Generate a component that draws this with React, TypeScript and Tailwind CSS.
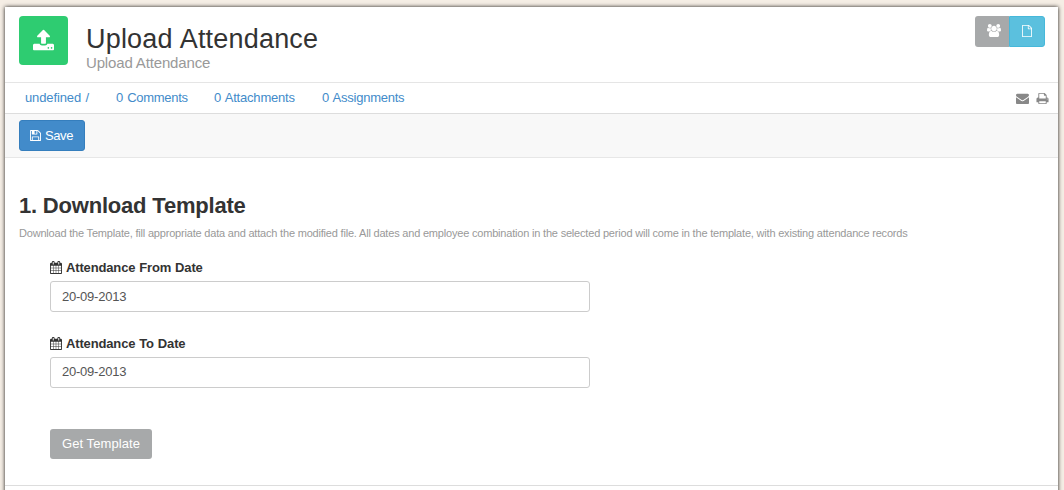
import React from "react";

const paths = {
  upload:
    "M1344 1472q0-26-19-45t-45-19-45 19-19 45 19 45 45 19 45-19 19-45zm256 0q0-26-19-45t-45-19-45 19-19 45 19 45 45 19 45-19 19-45zm128-224v320q0 40-28 68t-68 28h-1472q-40 0-68-28t-28-68v-320q0-40 28-68t68-28h427q21 56 70.5 92t110.5 36h256q61 0 110.5-36t70.5-92h427q40 0 68 28t28 68zm-325-648q-17 40-59 40h-256v448q0 26-19 45t-45 19h-256q-26 0-45-19t-19-45v-448h-256q-42 0-59-40-17-39 14-69l448-448q18-19 45-19t45 19l448 448q31 30 14 69z",
  calendar:
    "M192 1664h288v-288h-288v288zm352 0h320v-288h-320v288zm-352-352h288v-320h-288v320zm352 0h320v-320h-320v320zm-352-384h288v-288h-288v288zm736 736h320v-288h-320v288zm-384-736h320v-288h-320v288zm768 736h288v-288h-288v288zm-384-352h320v-320h-320v320zm-352-864v-288q0-13-9.5-22.5t-22.5-9.5h-64q-13 0-22.5 9.5t-9.5 22.5v288q0 13 9.5 22.5t22.5 9.5h64q13 0 22.5-9.5t9.5-22.5zm736 864h288v-320h-288v320zm-384-384h320v-288h-320v288zm384 0h288v-288h-288v288zm32-480v-288q0-13-9.5-22.5t-22.5-9.5h-64q-13 0-22.5 9.5t-9.5 22.5v288q0 13 9.5 22.5t22.5 9.5h64q13 0 22.5-9.5t9.5-22.5zm384-64v1280q0 52-38 90t-90 38h-1408q-52 0-90-38t-38-90v-1280q0-52 38-90t90-38h128v-96q0-66 47-113t113-47h64q66 0 113 47t47 113v96h384v-96q0-66 47-113t113-47h64q66 0 113 47t47 113v96h128q52 0 90 38t38 90z",
  save: "M512 1536h768v-384h-768v384zm896 0h128v-896q0-14-10-38.5t-20-34.5l-281-281q-10-10-34-20t-39-10v416q0 40-28 68t-68 28h-576q-40 0-68-28t-28-68v-416h-128v1280h128v-416q0-40 28-68t68-28h832q40 0 68 28t28 68v416zm-384-928v-320q0-13-9.5-22.5t-22.5-9.5h-192q-13 0-22.5 9.5t-9.5 22.5v320q0 13 9.5 22.5t22.5 9.5h192q13 0 22.5-9.5t9.5-22.5zm640 32v928q0 40-28 68t-68 28h-1344q-40 0-68-28t-28-68v-1344q0-40 28-68t68-28h928q40 0 88 20t76 48l280 280q28 28 48 76t20 88z",
  envelope:
    "M1792 710v794q0 66-47 113t-113 47h-1472q-66 0-113-47t-47-113v-794q44 49 101 87 362 246 497 345 57 42 92.5 65.5t94.5 48 110 24.5h2q51 0 110-24.5t94.5-48 92.5-65.5q170-123 498-345 57-39 100-87zm0-294q0 79-49 151t-122 123q-376 261-468 325-10 7-42.5 31t-54 38-52 32.5-57.5 27-50 9h-2q-23 0-50-9t-57.5-27-52-32.5-54-38-42.5-31q-91-64-262-182.5t-205-142.5q-62-42-117-115.5t-55-136.5q0-78 41.5-130t118.5-52h1472q65 0 112.5 47t47.5 113z",
  print:
    "M448 1536h896v-256h-896v256zm0-640h896v-384h-160q-40 0-68-28t-28-68v-160h-640v640zm1152 64q0-26-19-45t-45-19-45 19-19 45 19 45 45 19 45-19 19-45zm128 0v416q0 13-9.5 22.5t-22.5 9.5h-224v160q0 40-28 68t-68 28h-960q-40 0-68-28t-28-68v-160h-224q-13 0-22.5-9.5t-9.5-22.5v-416q0-79 56.5-135.5t135.5-56.5h64v-544q0-40 28-68t68-28h672q40 0 88 20t76 48l152 152q28 28 48 76t20 88v256h64q79 0 135.5 56.5t56.5 135.5z",
  file: "M1596 380q28 28 48 76t20 88v1152q0 40-28 68t-68 28h-1344q-40 0-68-28t-28-68v-1600q0-40 28-68t68-28h896q40 0 88 20t76 48zm-444-244v376h376q-10-29-22-41l-313-313q-12-12-41-22zm384 1528v-1024h-416q-40 0-68-28t-28-68v-416h-768v1536h1280z",
  users:
    "M657 896q-162 5-265 128h-134q-82 0-138-40.5t-56-118.5q0-353 124-353 6 0 43.5 21t97.5 42.5 119 21.5q67 0 133-23-5 37-5 66 0 139 81 256zm1071 637q0 120-73 189.5t-194 69.5h-874q-121 0-194-69.5t-73-189.5q0-53 3.5-103.5t14-109 26.5-108.5 43-97.5 62-81 85.5-53.5 111.5-20q10 0 43 21.5t73 48 107 48 135 21.5 135-21.5 107-48 73-48 43-21.5q61 0 111.5 20t85.5 53.5 62 81 43 97.5 26.5 108.5 14 109 3.5 103.5zm-1024-1277q0 106-75 181t-181 75-181-75-75-181 75-181 181-75 181 75 75 181zm704 384q0 159-112.5 271.5t-271.5 112.5-271.5-112.5-112.5-271.5 112.5-271.5 271.5-112.5 271.5 112.5 112.5 271.5zm576 225q0 78-56 118.5t-138 40.5h-134q-103-123-265-128 81-117 81-256 0-29-5-66 66 23 133 23 59 0 119-21.5t97.5-42.5 43.5-21q124 0 124 353zm-128-609q0 106-75 181t-181 75-181-75-75-181 75-181 181-75 181 75 75 181z",
};

const viewBoxes: Partial<Record<keyof typeof paths, string>> = {
  upload: "64 0 1664 1792",
  users: "64 0 1920 1792",
  file: "128 0 1536 1792",
  calendar: "64 0 1664 1792",
  save: "128 128 1536 1536",
};

function Icon({ name, className }: { name: keyof typeof paths; className: string }) {
  return (
    <svg viewBox={viewBoxes[name] ?? "0 0 1792 1792"} preserveAspectRatio="none" fill="currentColor" className={className}>
      <path d={paths[name]} />
    </svg>
  );
}

function DateField({ label, className, inputClassName }: { label: string; className: string; inputClassName: string }) {
  return (
    <div className={className}>
      <label className="flex h-5 items-center gap-1 font-bold tracking-[-0.15px] whitespace-nowrap [word-spacing:0.5px]">
        <Icon name="calendar" className="mb-[2px] h-[13px] w-3" />
        {label}
      </label>
      <input
        className={`mt-[3px] block h-[31px] w-[540px] rounded-[3px] border border-[#ccc] bg-white px-[11px] tracking-[-0.23px] text-[#555] outline-none ${inputClassName}`}
        defaultValue="20-09-2013"
      />
    </div>
  );
}

export default function App() {
  return (
    <div className="h-[490px] overflow-hidden bg-[#f5eee5] px-[5px] pt-[7px] font-['Liberation_Sans',Arial,sans-serif] text-[13px] leading-5 text-[#333]">
      <main className="h-[500px] w-[1053px] bg-white shadow-[0_0_4px_rgba(0,0,0,0.9)]">
        <header className="flex h-[76px] items-start border-b border-[#e5e5e5] pr-[13px] pl-[14px]">
          <div className="mt-[9px] flex size-[49px] items-center justify-center rounded-[4px] bg-[#2ecc71] pb-px text-white">
            <Icon name="upload" className="h-[23px] w-[21px]" />
          </div>
          <div className="mt-[16px] ml-[18px] grow whitespace-nowrap">
            <h1 className="text-[27px] leading-[32px] tracking-[0.2px] [word-spacing:0.7px]">Upload Attendance</h1>
            <p className="text-[15px] leading-4 tracking-[-0.15px] text-[#999]">Upload Attendance</p>
          </div>
          <div className="mt-[9px] flex h-[31px] text-white">
            <button className="flex w-[34px] items-center justify-center rounded-l-[3px] bg-[#a7a9aa] pb-[2px] pl-1">
              <Icon name="users" className="h-[13px] w-[14px]" />
            </button>
            <button className="flex w-9 items-center justify-center rounded-r-[3px] border border-[#46b8da] bg-[#5bc0de] pb-px">
              <Icon name="file" className="mr-px h-[12px] w-[10px]" />
            </button>
          </div>
        </header>
        <nav className="flex h-[31px] items-center border-b border-[#ddd] pr-[9px] pl-5 tracking-[-0.2px] whitespace-nowrap text-[#428bca] [word-spacing:1px]">
          <a className="w-[91px] tracking-[-0.12px]">undefined /</a>
          <a className="w-[98px] tracking-[-0.3px]">0 Comments</a>
          <a className="w-[108px]">0 Attachments</a>
          <a className="grow tracking-[-0.25px]">0 Assignments</a>
          <span className="flex items-center gap-[7px] pt-px text-[#888]">
            <Icon name="envelope" className="size-[13px]" />
            <Icon name="print" className="size-[13px]" />
          </span>
        </nav>
        <div className="flex h-11 items-start border-b border-[#e7e7e7] bg-[#f8f8f8] pt-[6px] pl-[14px]">
          <button className="flex h-[31px] w-[66px] items-center rounded-[3px] border border-[#357ebd] bg-[#428bca] pl-[10px] tracking-[-0.4px] text-white">
            <Icon name="save" className="mr-1 size-[11px]" />
            Save
          </button>
        </div>
        <section className="h-[328px] border-b border-[#ddd] pt-[35px] pl-[14px]">
          <h2 className="text-[22px] leading-[26px] font-bold tracking-[-0.2px] whitespace-nowrap">1. Download Template</h2>
          <p className="mt-[5px] text-[11px] leading-[18px] tracking-[-0.193px] whitespace-nowrap text-[#999]">
            Download the Template, fill appropriate data and attach the modified file. All dates and employee combination
            in the selected period will come in the template, with existing attendance records
          </p>
          <div className="pl-[31px]">
            <DateField label="Attendance From Date" className="mt-4" inputClassName="pb-0" />
            <DateField label="Attendance To Date" className="mt-[22px]" inputClassName="pb-[2px]" />
            <button className="mt-[41px] block h-[30px] w-[102px] rounded-[3px] bg-[#a7a9aa] tracking-[0.08px] text-white">
              Get Template
            </button>
          </div>
        </section>
      </main>
    </div>
  );
}
